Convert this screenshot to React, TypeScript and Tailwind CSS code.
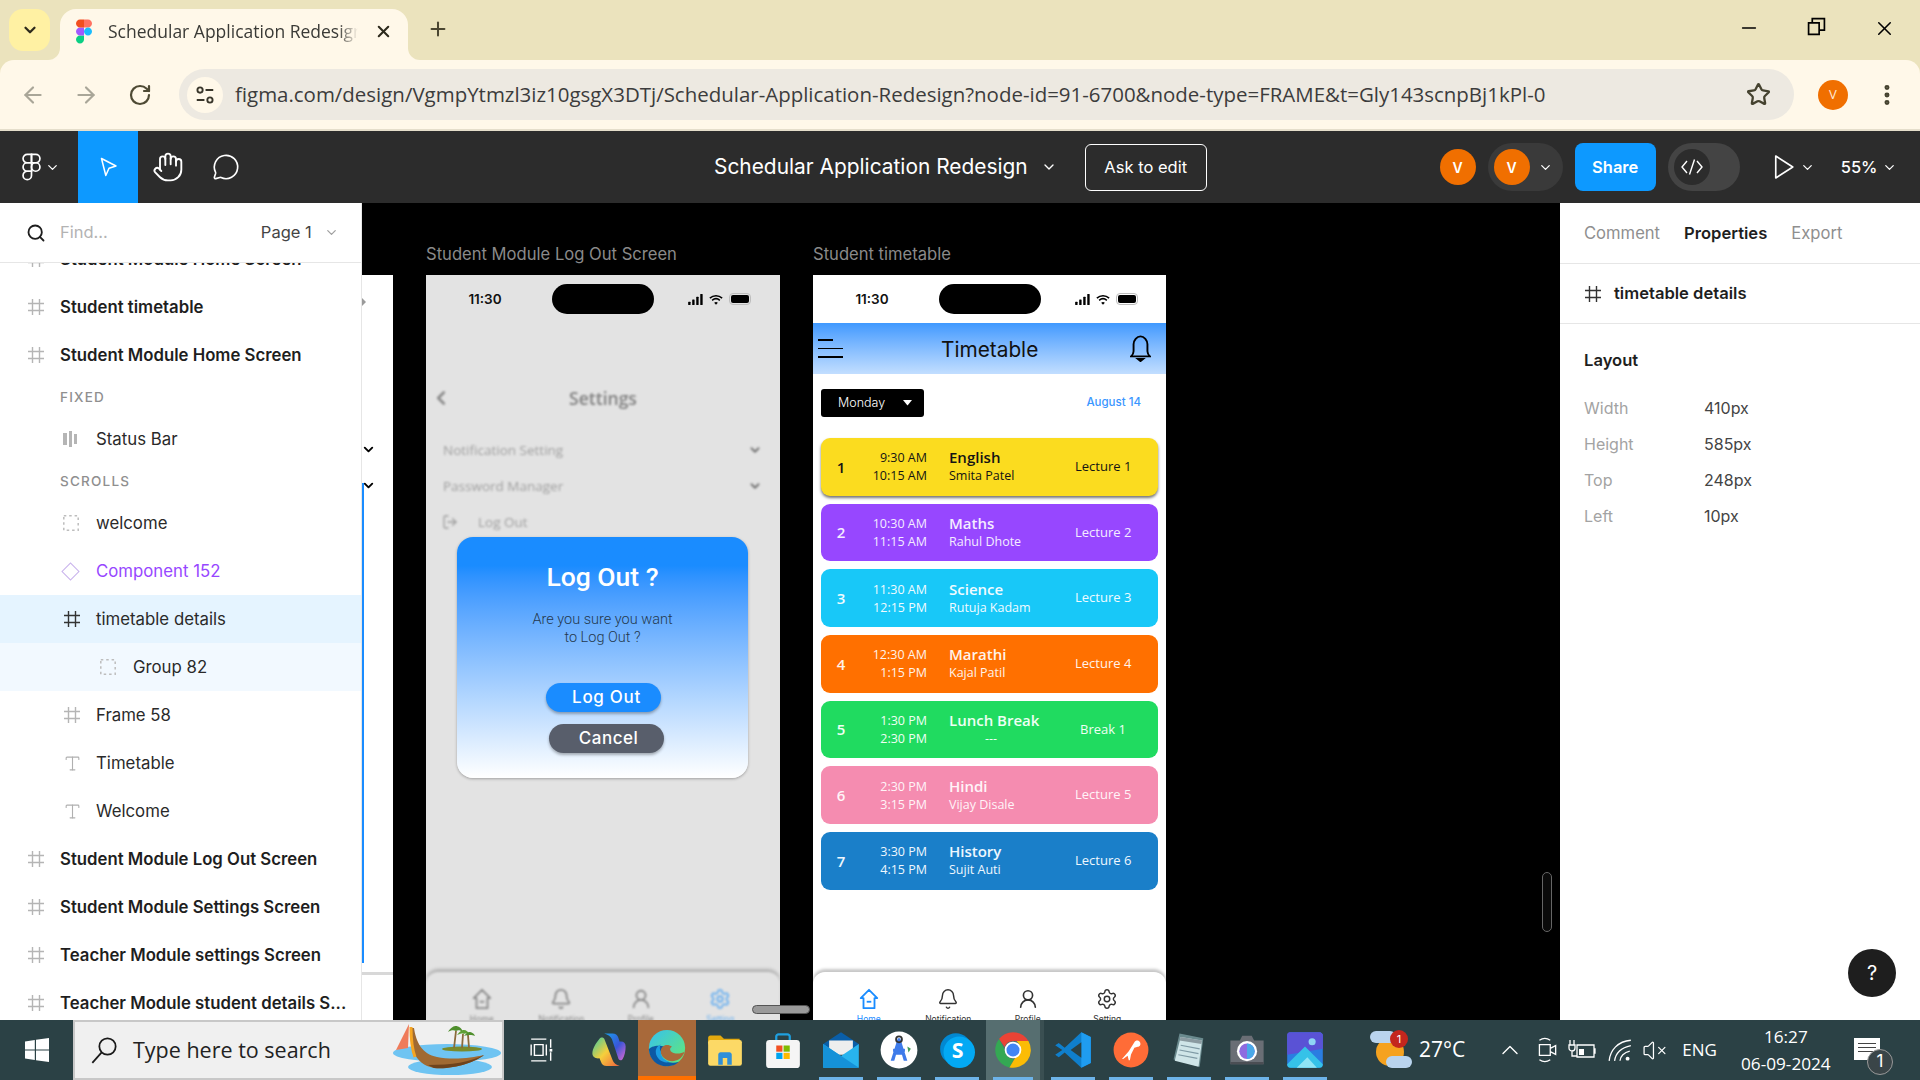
import type { ReactNode } from 'react'
import {
  ArrowLeft,
  ArrowRight,
  Bell,
  ChevronDown,
  ChevronLeft,
  ChevronUp,
  EllipsisVertical,
  Hand,
  LogOut,
  MessageCircle,
  Minus,
  Plus,
  RotateCw,
  Search,
  Settings,
  Star,
  Type,
  UserRound,
  VolumeX,
  X,
} from 'lucide-react'

function FigmaLogo({ outline = false }: { outline?: boolean }) {
  const props = outline
    ? { fill: 'none', stroke: 'white', strokeWidth: 2.4 }
    : {}
  return (
    <svg viewBox="-1.5 -1.5 27 39" className="h-full w-full">
      <path {...props} fill={outline ? 'none' : '#0acf83'} d="M6 36c3.3 0 6-2.7 6-6v-6H6c-3.3 0-6 2.7-6 6s2.7 6 6 6z" />
      <path {...props} fill={outline ? 'none' : '#a259ff'} d="M0 18c0-3.3 2.7-6 6-6h6v12H6c-3.3 0-6-2.7-6-6z" />
      <path {...props} fill={outline ? 'none' : '#f24e1e'} d="M0 6c0-3.3 2.7-6 6-6h6v12H6C2.7 12 0 9.3 0 6z" />
      <path {...props} fill={outline ? 'none' : '#ff7262'} d="M12 0h6c3.3 0 6 2.7 6 6s-2.7 6-6 6h-6V0z" />
      <path {...props} fill={outline ? 'none' : '#1abcfe'} d="M24 18c0 3.3-2.7 6-6 6s-6-2.7-6-6 2.7-6 6-6 6 2.7 6 6z" />
    </svg>
  )
}

function FrameHash({ className }: { className: string }) {
  return (
    <svg viewBox="0 0 18 18" className={className} fill="none" stroke="currentColor" strokeWidth="1.4">
      <path d="M5.5 1v16M12.5 1v16M1 5.5h16M1 12.5h16" />
    </svg>
  )
}

function TabStrip() {
  return (
    <div className="relative flex h-[60px] shrink-0 bg-[#ebe3bd] pt-[9px]">
      <div className="ml-[9px] flex h-[42px] w-[41px] items-center justify-center rounded-[14px] bg-[#fff1a3]">
        <ChevronDown className="size-[18px] text-[#2d2a1c]" strokeWidth={3} />
      </div>
      <div className="relative ml-[10px] flex h-[51px] w-[348px] items-center rounded-t-[16px] bg-[#fff8e9] pb-[6px] pl-[15px]">
        <div className="h-[27px] w-[18px]">
          <FigmaLogo />
        </div>
        <span className="ml-[15px] w-[250px] overflow-hidden whitespace-nowrap font-['Open_Sans',sans-serif] text-[17.5px] text-[#3a3a36] [mask-image:linear-gradient(to_right,black_92%,transparent)]">
          Schedular Application Redesign
        </span>
        <X className="ml-[16px] size-[19px] text-[#2d2a1c]" strokeWidth={2.6} />
        <div className="absolute bottom-0 left-[-12px] size-3 bg-[#fff8e9]">
          <div className="size-3 rounded-br-[12px] bg-[#ebe3bd]" />
        </div>
        <div className="absolute right-[-12px] bottom-0 size-3 bg-[#fff8e9]">
          <div className="size-3 rounded-bl-[12px] bg-[#ebe3bd]" />
        </div>
      </div>
      <Plus className="mt-[9px] ml-[19px] size-[22px] text-[#4a4631]" strokeWidth={2.2} />
      <div className="ml-auto flex items-start pt-[8px] pr-[24px] text-black">
        <Minus className="size-[22px]" strokeWidth={1.6} />
        <svg viewBox="0 0 18 18" className="ml-[47px] size-[19px]" fill="none" stroke="black" strokeWidth="1.6">
          <path d="M1.5 5.5h10v11h-10zM5 5V1.500h11.500v11H12" />
        </svg>
        <X className="ml-[47px] size-[23px]" strokeWidth={1.6} />
      </div>
    </div>
  )
}

function ChromeBar() {
  return (
    <div className="flex h-[71px] shrink-0 items-center rounded-t-[14px] border-b-2 border-[#e5decb] bg-[#fff8e9] bg-clip-padding">
      <ArrowLeft className="ml-[20px] size-[26px] text-[#a9a698]" strokeWidth={2} />
      <ArrowRight className="ml-[27px] size-[26px] text-[#a9a698]" strokeWidth={2} />
      <RotateCw className="ml-[29px] size-[24px] text-[#4e4a34]" strokeWidth={2.2} />
      <div className="ml-[27px] flex h-[51px] w-[1615px] items-center rounded-full bg-[#ede9e1] pl-[8px]">
        <div className="flex size-[36px] items-center justify-center rounded-full bg-[#fff8e9]">
          <svg viewBox="0 0 20 20" className="size-[22px]" fill="none" stroke="#38352a" strokeWidth="1.7">
            <circle cx="5.5" cy="5.5" r="2.4" />
            <path d="M10.500 5.500h7M2.500 14.500h7" />
            <circle cx="14.500" cy="14.500" r="2.400" />
          </svg>
        </div>
        <span className="ml-[12px] font-['Open_Sans',sans-serif] text-[20.47px] whitespace-nowrap text-[#3c3c3c]">
          figma.com/design/VgmpYtmzl3iz10gsgX3DTj/Schedular-Application-Redesign?node-id=91-6700&amp;node-type=FRAME&amp;t=Gly143scnpBj1kPl-0
        </span>
        <Star className="mr-[23px] ml-auto size-[25px] text-[#45422f]" strokeWidth={2.2} />
      </div>
      <div className="ml-[24px] flex size-[30px] items-center justify-center rounded-full bg-[#f06f00] font-['Open_Sans',sans-serif] text-[13px] text-[#ffe9d6]">
        V
      </div>
      <EllipsisVertical className="ml-[26px] size-[26px] text-[#45422f]" strokeWidth={2.6} />
    </div>
  )
}

function Avatar() {
  return (
    <div className="flex size-[36px] items-center justify-center rounded-full bg-[#f06f00] text-[14px] font-semibold text-white">
      V
    </div>
  )
}

function FigmaBar() {
  return (
    <div className="flex h-[72px] shrink-0 items-center bg-[#2c2c2c] text-white">
      <div className="ml-[22px] h-[28px] w-[19px]">
        <FigmaLogo outline />
      </div>
      <ChevronDown className="ml-[4px] size-[15px]" strokeWidth={2} />
      <div className="ml-[18px] flex h-full w-[60px] items-center justify-center bg-[#0d99ff]">
        <svg viewBox="0 0 24 24" className="size-[24px]" fill="none" stroke="white" strokeWidth="1.5" strokeLinejoin="round">
          <path d="M5.500 3.500 20 11l-7 2.200-3.200 7.300z" />
        </svg>
      </div>
      <Hand className="ml-[14px] size-[32px]" strokeWidth={1.4} />
      <MessageCircle className="ml-[28px] size-[28px]" strokeWidth={1.4} />
      <span className="ml-[474px] text-[20.9px]">Schedular Application Redesign</span>
      <ChevronDown className="ml-[13px] size-[16px]" strokeWidth={2} />
      <div className="ml-[28px] flex h-[47px] w-[122px] items-center justify-center rounded-[6px] border border-white text-[16.5px]">
        Ask to edit
      </div>
      <div className="ml-[233px]">
        <Avatar />
      </div>
      <div className="ml-[12px] flex h-[48px] w-[75px] items-center rounded-full bg-[#3a3a3a] pl-[6px]">
        <Avatar />
        <ChevronDown className="ml-[8px] size-[15px]" strokeWidth={2} />
      </div>
      <div className="ml-[12px] flex h-[48px] w-[81px] items-center justify-center rounded-[8px] bg-[#0d99ff] text-[16.5px] font-semibold">
        Share
      </div>
      <div className="ml-[12px] flex h-[48px] w-[72px] items-center rounded-full bg-[#444444] pl-[6px]">
        <div className="flex size-[36px] items-center justify-center rounded-full bg-[#2c2c2c] text-[15px]">
          <svg viewBox="0 0 24 24" className="size-[24px]" fill="none" stroke="white" strokeWidth="1.4">
            <path d="M7 6 2 12l5 6M17 6l5 6-5 6M14.500 4.500l-5 15" />
          </svg>
        </div>
      </div>
      <svg viewBox="0 0 20 24" className="ml-[33px] h-[28px] w-[22px]" fill="none" stroke="white" strokeWidth="1.5" strokeLinejoin="round">
        <path d="M2.500 2v20L18 12z" />
      </svg>
      <ChevronDown className="ml-[5px] size-[15px]" strokeWidth={2} />
      <span className="ml-[26px] text-[16.5px] font-medium">55%</span>
      <ChevronDown className="ml-[4px] size-[15px]" strokeWidth={2} />
    </div>
  )
}

type LayerRow = {
  label: string
  kind: 'frame' | 'section' | 'bars' | 'group' | 'component' | 'framedark' | 'frameIndent' | 'text'
  indent?: number
  bg?: string
}

const layerRows: LayerRow[] = [
  { label: 'Student Module Home Screen', kind: 'frame' },
  { label: 'Student timetable', kind: 'frame' },
  { label: 'Student Module Home Screen', kind: 'frame' },
  { label: 'FIXED', kind: 'section' },
  { label: 'Status Bar', kind: 'bars' },
  { label: 'SCROLLS', kind: 'section' },
  { label: 'welcome', kind: 'group' },
  { label: 'Component 152', kind: 'component' },
  { label: 'timetable details', kind: 'framedark', bg: 'bg-[#e5f4ff]' },
  { label: 'Group 82', kind: 'group', indent: 1, bg: 'bg-[#f2f9ff]' },
  { label: 'Frame 58', kind: 'frameIndent' },
  { label: 'Timetable', kind: 'text' },
  { label: 'Welcome', kind: 'text' },
  { label: 'Student Module Log Out Screen', kind: 'frame' },
  { label: 'Student Module Settings Screen', kind: 'frame' },
  { label: 'Teacher Module settings Screen', kind: 'frame' },
  { label: 'Teacher Module student details S...', kind: 'frame' },
]

function LayerIcon({ kind }: { kind: LayerRow['kind'] }) {
  if (kind === 'bars') {
    return (
      <div className="flex h-[16px] items-center gap-[2px]">
        <div className="h-[12px] w-[4px] bg-[#b5b5b5]" />
        <div className="h-[16px] w-[3px] bg-[#b5b5b5]" />
        <div className="h-[10px] w-[3px] bg-[#b5b5b5]" />
      </div>
    )
  }
  if (kind === 'group') {
    return (
      <svg viewBox="0 0 16 16" className="size-[16px]" fill="none" stroke="#bdbdbd" strokeWidth="1.5" strokeDasharray="2.500 2.900">
        <rect x=".8" y=".8" width="14.400" height="14.400" />
      </svg>
    )
  }
  if (kind === 'component') {
    return <div className="ml-[1px] size-[13px] rotate-45 border-[1.5px] border-[#c9b3ec]" />
  }
  if (kind === 'text') {
    return <Type className="size-[19px] text-[#b0b0b0]" strokeWidth={1.4} />
  }
  if (kind === 'framedark') {
    return <FrameHash className="size-[18px] text-[#333333]" />
  }
  return <FrameHash className="size-[18px] text-[#b5b5b5]" />
}

function LayerItem({ row }: { row: LayerRow }) {
  if (row.kind === 'section') {
    return (
      <div className="flex h-[36px] items-center pl-[60px] text-[13.5px] font-medium tracking-[0.09em] text-[#8f8f8f]">
        {row.label}
      </div>
    )
  }
  if (row.kind === 'frame') {
    return (
      <div className="flex h-[48px] items-center pl-[27px]">
        <div className="flex w-[33px] items-center">
          <LayerIcon kind="frame" />
        </div>
        <span className="text-[16.75px] leading-[26px] font-semibold whitespace-nowrap text-[#1e1e1e]">{row.label}</span>
      </div>
    )
  }
  return (
    <div className={`flex h-[48px] items-center ${row.indent ? 'pl-[100px]' : 'pl-[63px]'} ${row.bg ?? ''}`}>
      <div className="flex w-[33px] items-center">
        <LayerIcon kind={row.kind} />
      </div>
      <span className={`pt-[2px] text-[16.8px] whitespace-nowrap ${row.kind === 'component' ? 'text-[#9747ff]' : 'text-[#2a2a2a]'}`}>
        {row.label}
      </span>
    </div>
  )
}

function LayersPanel() {
  return (
    <div className="flex w-[362px] shrink-0 flex-col overflow-hidden border-r border-[#e6e6e6] bg-white">
      <div className="relative z-10 flex h-[60px] shrink-0 items-center border-b border-[#e6e6e6] bg-white pl-[26px]">
        <Search className="size-[20px] text-[#1e1e1e]" strokeWidth={2.2} />
        <span className="ml-[14px] text-[16.5px] text-[#b3b3b3]">Find...</span>
        <span className="ml-[153px] text-[16.5px] text-[#444444]">Page 1</span>
        <ChevronDown className="ml-[12px] size-[15px] text-[#a0a0a0]" />
      </div>
      <div className="mt-[-28px]">
        {layerRows.map((row, i) => (
          <LayerItem key={i} row={row} />
        ))}
      </div>
    </div>
  )
}

function StatusBar() {
  return (
    <div className="flex h-[48px] shrink-0 items-center">
      <span className="w-[118px] text-center text-[13.5px] font-semibold text-[#111111]">11:30</span>
      <div className="ml-[8px] h-[30px] w-[102px] rounded-full bg-black" />
      <div className="ml-[34px] flex items-center gap-[6px]">
        <svg viewBox="0 0 16 12" className="h-[11px] w-[15px]" fill="black">
          <rect x="0" y="8.500" width="2.600" height="3.500" rx=".6" />
          <rect x="4.400" y="6" width="2.600" height="6" rx=".6" />
          <rect x="8.800" y="3" width="2.600" height="9" rx=".6" />
          <rect x="13.200" y="0" width="2.600" height="12" rx=".6" />
        </svg>
        <svg viewBox="0 0 16 12" className="h-[11px] w-[14px]" fill="none" stroke="black" strokeWidth="1.8">
          <path d="M1 4.400c4-3.600 10-3.600 14 0M3.600 7c2.600-2.300 6.200-2.300 8.800 0" />
          <path d="M8 12 5.900 9.600c1.200-1 3-1 4.200 0z" fill="black" stroke="none" />
        </svg>
        <div className="ml-[2px] flex h-[8px] w-[18px] rounded-[2px] bg-black outline outline-[1px] outline-offset-[1px] outline-[#bdbdbd]" />
      </div>
    </div>
  )
}

type NavItem = { label: string; icon: ReactNode; color: string }

const HomeIcon = (
  <svg viewBox="0 0 24 24" className="size-[22px]" fill="none" stroke="currentColor" strokeWidth="2" strokeLinejoin="round">
    <path d="M12 2 3 11h3v11h12V11h3z" />
    <path d="M9.500 15h5" />
  </svg>
)

function BottomNav({ items }: { items: NavItem[] }) {
  return (
    <div className="mt-auto h-[48px] shrink-0 rounded-t-[12px] bg-inherit shadow-[0_-3px_3px_rgba(0,0,0,0.22)]">
      <div className="flex pt-[16px] pl-[16px]">
        {items.map(item => (
          <div key={item.label} className={`flex w-[79.5px] flex-col items-center ${item.color}`}>
            {item.icon}
            <span className="mt-[3px] text-[8.5px] whitespace-nowrap">{item.label}</span>
          </div>
        ))}
      </div>
    </div>
  )
}

function LogOutFrame() {
  return (
    <div className="relative flex h-[745px] w-[354px] flex-col bg-[#e3e3e3]">
      <StatusBar />
      <div className="flex h-full flex-col blur-[1.2px]">
        <div className="relative mt-[55px] flex h-[40px] shrink-0 items-center justify-center font-['Open_Sans',sans-serif] text-[17.5px] font-semibold text-[#808080]">
          <ChevronLeft className="absolute left-[4px] size-[22px] text-[#8d8d8d]" strokeWidth={3} />
          Settings
        </div>
        <div className="mt-[14px] flex flex-col font-['Open_Sans',sans-serif] text-[13.5px] text-[#a0a0a0]">
          <div className="flex h-[36px] items-center justify-between pr-[18px] pl-[17px]">
            Notification Setting
            <ChevronDown className="size-[14px] text-[#777777]" strokeWidth={3.5} />
          </div>
          <div className="flex h-[36px] items-center justify-between pr-[18px] pl-[17px]">
            Password Manager
            <ChevronDown className="size-[14px] text-[#777777]" strokeWidth={3.5} />
          </div>
          <div className="flex h-[36px] items-center pl-[16px]">
            <LogOut className="size-[16px] text-[#a0a0a0]" />
            <span className="ml-[20px]">Log Out</span>
          </div>
        </div>
        <BottomNav
          items={[
            { label: 'Home', icon: HomeIcon, color: 'text-[#8a8a8a]' },
            { label: 'Notification', icon: <Bell className="size-[22px]" />, color: 'text-[#8a8a8a]' },
            { label: 'Profile', icon: <UserRound className="size-[22px]" />, color: 'text-[#8a8a8a]' },
            { label: 'Setting', icon: <Settings className="size-[22px]" />, color: 'text-[#6fb2ef]' },
          ]}
        />
      </div>
      <div className="absolute top-[262px] left-[31px] flex h-[241px] w-[291px] flex-col items-center rounded-[16px] bg-gradient-to-b from-[#1a8cff] from-[12%] to-white shadow-[0_1px_3px_rgba(0,0,0,0.3)]">
        <div className="mt-[20px] h-[40px] font-['Roboto',sans-serif] text-[26.5px] leading-[40px] font-medium text-white">Log Out ?</div>
        <div className="mt-[14px] text-center font-['Roboto',sans-serif] text-[14.5px] leading-[18px] font-light text-[#24384d]">
          Are you sure you want
          <br />
          to Log Out ?
        </div>
        <div className="mt-[36px] ml-[2px] flex h-[29px] w-[115px] items-center justify-center rounded-full bg-[#1a8cff] pt-[1px] pl-[6px] font-['Inter',sans-serif] text-[17px] font-medium tracking-[0.04em] text-white shadow-[0_2px_3px_rgba(0,0,0,0.3)]">
          Log Out
        </div>
        <div className="mt-[12px] ml-[8px] flex h-[29px] w-[115px] items-center justify-center rounded-full bg-[#585e6b] pt-[1px] pl-[4px] font-['Inter',sans-serif] text-[17px] font-medium tracking-[0.03em] text-white shadow-[0_2px_3px_rgba(0,0,0,0.3)]">
          Cancel
        </div>
      </div>
    </div>
  )
}

type Lecture = {
  n: number
  from: string
  to: string
  subject: string
  teacher: string
  tag: string
  bg: string
  text: string
}

const lectures: Lecture[] = [
  { n: 1, from: '9:30 AM', to: '10:15 AM', subject: 'English', teacher: 'Smita Patel', tag: 'Lecture 1', bg: 'bg-[#fbdc1f] shadow-[0_2px_3px_rgba(0,0,0,0.55)]', text: 'text-[#141414]' },
  { n: 2, from: '10:30 AM', to: '11:15 AM', subject: 'Maths', teacher: 'Rahul Dhote', tag: 'Lecture 2', bg: 'bg-[#9747ff]', text: 'text-[#f4ecff]' },
  { n: 3, from: '11:30 AM', to: '12:15 PM', subject: 'Science', teacher: 'Rutuja Kadam', tag: 'Lecture 3', bg: 'bg-[#18c8f8]', text: 'text-[#f0fbff]' },
  { n: 4, from: '12:30 AM', to: '1:15 PM', subject: 'Marathi', teacher: 'Kajal Patil', tag: 'Lecture 4', bg: 'bg-[#ff7000]', text: 'text-[#fff3ea]' },
  { n: 5, from: '1:30 PM', to: '2:30 PM', subject: 'Lunch Break', teacher: '---', tag: 'Break 1', bg: 'bg-[#20db60]', text: 'text-[#effff4]' },
  { n: 6, from: '2:30 PM', to: '3:15 PM', subject: 'Hindi', teacher: 'Vijay Disale', tag: 'Lecture 5', bg: 'bg-[#f58cb0]', text: 'text-[#fff4f8]' },
  { n: 7, from: '3:30 PM', to: '4:15 PM', subject: 'History', teacher: 'Sujit Auti', tag: 'Lecture 6', bg: 'bg-[#1a7fc9]', text: 'text-[#eef7fe]' },
]

function LectureCard({ item }: { item: Lecture }) {
  const isBreak = item.subject === 'Lunch Break'
  return (
    <div className={`flex h-[57.67px] items-center rounded-[9px] font-['Open_Sans',sans-serif] ${item.bg} ${item.text}`}>
      <span className="w-[40px] text-center text-[15px] font-semibold">{item.n}</span>
      <div className="w-[66px] pt-[1px] text-right text-[12.5px] leading-[18px]">
        <div>{item.from}</div>
        <div>{item.to}</div>
      </div>
      <div className="ml-[22px] w-[126px] leading-[18px]">
        <div className="text-[15px] font-semibold">{item.subject}</div>
        <div className={`mt-[1px] text-[12.5px] ${isBreak ? 'w-[84px] text-center' : ''}`}>{item.teacher}</div>
      </div>
      <span className="w-[56px] text-center text-[13px] whitespace-nowrap">{item.tag}</span>
    </div>
  )
}

function TimetableFrame() {
  return (
    <div className="flex h-[745px] w-[353px] flex-col bg-white">
      <StatusBar />
      <div className="flex h-[51px] shrink-0 items-center bg-gradient-to-b from-[#3f99ff] to-[#c2deff] pr-[15px] pl-[5px]">
        <div className="flex w-[25px] flex-col gap-[7px]">
          <div className="h-[1.5px] w-[15px] bg-black" />
          <div className="h-[1.5px] bg-black" />
          <div className="h-[1.5px] bg-black" />
        </div>
        <span className="ml-[98px] pt-[2px] text-[20.8px] text-[#111111]">Timetable</span>
        <svg viewBox="0 0 20 25" className="ml-auto h-[27px] w-[21px]" fill="none" stroke="black" strokeWidth="1.8">
          <path d="M1 20h18c-2-2-2.400-3-2.400-5V8.500C16.600 4.500 13.500 1 10 1S3.400 4.500 3.400 8.500V15c0 2-.4 3-2.400 5z" />
          <path d="M7.500 22.500h5L10 24.500z" fill="black" />
        </svg>
      </div>
      <div className="flex items-center justify-between pt-[15px] pr-[25px] pl-[8px]">
        <div className="flex h-[28px] w-[103px] items-center rounded-[3px] bg-black pl-[17px] text-[12.5px] font-light text-white">
          Monday
          <svg viewBox="0 0 10 6" className="ml-[18px] w-[9px]" fill="white">
            <path d="M0 0h10L5 6z" />
          </svg>
        </div>
        <span className="text-[11.5px] font-medium text-[#3a96ff]">August 14</span>
      </div>
      <div className="mt-[21px] flex flex-col gap-[8px] px-[8px]">
        {lectures.map(item => (
          <LectureCard key={item.n} item={item} />
        ))}
      </div>
      <BottomNav
        items={[
          { label: 'Home', icon: HomeIcon, color: 'text-[#1a8cff]' },
          { label: 'Notification', icon: <Bell className="size-[22px]" strokeWidth={1.6} />, color: 'text-[#333333]' },
          { label: 'Profile', icon: <UserRound className="size-[22px]" strokeWidth={1.8} />, color: 'text-[#333333]' },
          { label: 'Setting', icon: <Settings className="size-[22px]" strokeWidth={1.6} />, color: 'text-[#333333]' },
        ]}
      />
    </div>
  )
}

function Canvas() {
  return (
    <div className="relative flex-1 overflow-hidden bg-black">
      {/* neighbour frame cut off by the layers panel */}
      <div className="absolute top-[72px] left-0 h-[745px] w-[31px] bg-white">
        <div className="absolute top-[697px] left-0 h-[3px] w-full bg-[#d8d8d8]" />
      </div>
      <svg viewBox="0 0 4 8" className="absolute top-[95px] left-0 h-[8px] w-[4px]" fill="#9a9a9a">
        <path d="M0 0l4 4-4 4z" />
      </svg>
      <ChevronDown className="absolute top-[239px] left-[-1px] size-[15px] text-black" strokeWidth={3} />
      <ChevronDown className="absolute top-[275px] left-[-1px] size-[15px] text-black" strokeWidth={3} />
      <div className="absolute top-[280px] left-0 h-[480px] w-[2px] bg-[#1a8cff]" />
      <div className="absolute top-[38px] left-[64px]">
        <div className="mb-[10px] h-[24px] pt-[1px] text-[16.6px] leading-[24px] text-[#8a8a8a]">Student Module Log Out Screen</div>
        <LogOutFrame />
      </div>
      <div className="absolute top-[38px] left-[451px]">
        <div className="mb-[10px] h-[24px] pt-[1px] text-[16.6px] leading-[24px] text-[#8a8a8a]">Student timetable</div>
        <TimetableFrame />
      </div>
      <div className="absolute top-[802px] left-[390px] h-[9px] w-[58px] rounded-full border border-[#555555] bg-[#9a9a9a]" />
      <div className="absolute top-[669px] left-[1180px] h-[60px] w-[10px] rounded-full border border-[#666666] bg-[#0a0a0a]" />
    </div>
  )
}

function PropRow({ label, value }: { label: string; value: string }) {
  return (
    <div className="flex h-[36px] items-center text-[16px]">
      <span className="w-[120px] text-[#a3a3a3]">{label}</span>
      <span className="text-[#444444]">{value}</span>
    </div>
  )
}

function PropertiesPanel() {
  return (
    <div className="relative flex w-[360px] shrink-0 flex-col bg-white">
      <div className="flex h-[61px] shrink-0 items-center gap-[24px] border-b border-[#e6e6e6] pl-[24px] text-[16.6px] text-[#8f8f8f]">
        <span>Comment</span>
        <span className="font-semibold text-[#1e1e1e]">Properties</span>
        <span>Export</span>
      </div>
      <div className="flex h-[60px] shrink-0 items-center border-b border-[#e6e6e6] pl-[24px]">
        <FrameHash className="size-[18px] text-[#333333]" />
        <span className="ml-[12px] text-[16.6px] font-semibold text-[#1e1e1e]">timetable details</span>
      </div>
      <div className="px-[24px] pt-[24px]">
        <div className="text-[16.6px] font-semibold text-[#1e1e1e]">Layout</div>
        <div className="mt-[17px]">
          <PropRow label="Width" value="410px" />
          <PropRow label="Height" value="585px" />
          <PropRow label="Top" value="248px" />
          <PropRow label="Left" value="10px" />
        </div>
      </div>
      <div className="absolute right-[24px] bottom-[23px] flex size-[48px] items-center justify-center rounded-full bg-[#1e1e1e] text-[20px] text-white">
        ?
      </div>
    </div>
  )
}

const WindowsLogo = (
  <svg viewBox="0 0 24 24" className="size-[24px]" fill="white">
    <path d="M0 3.400 9.800 2v9.400H0zM11 1.800 24 0v11.400H11zM0 12.600h9.800V22L0 20.600zM11 12.600h13V24l-13-1.800z" />
  </svg>
)

function Boat() {
  return (
    <svg viewBox="0 0 110 56" className="h-[56px] w-[110px]">
      <ellipse cx="55" cy="31" rx="54" ry="9" fill="#6fc4f2" />
      <ellipse cx="58" cy="45" rx="42" ry="8" fill="#6fc4f2" />
      <ellipse cx="70" cy="27" rx="20" ry="2.500" fill="#7a8a2a" />
      <path d="M62 26 64 9M70 26l1-14M77 26l-1-13" stroke="#8a6a3a" strokeWidth="1.800" fill="none" />
      <path d="M56 10c3-5 6-6 8-6s6 2 7 6c-3-2-5-2-7-1-2-1-5-1-8 1z" fill="#4f8f2d" />
      <path d="M65 13c3-4 5-5 7-5s5 2 6 5c-2-1-4-2-6-1-2-1-4 0-7 1z" fill="#5f9f35" />
      <path d="M72 14c3-4 5-4 6-4s4 1 5 4c-2-1-3-1-5-1-2 0-4 0-6 1z" fill="#4f8f2d" />
      <path d="M18 6C18 25 22 42 42 46 60 48 84 40 92 33 80 36 60 38 45 35 30 32 24 20 22 6z" fill="#a06a32" />
      <path d="M42 46C60 48 84 40 92 33 78 40 60 43 36 43z" fill="#6e431c" />
      <path d="M19 5c0 12 1 22 4 30" stroke="#f5a623" strokeWidth="3" fill="none" />
      <path d="M17 2 4 28l12-2z" fill="#ef7b5a" />
    </svg>
  )
}

const CopilotIcon = (
  <svg viewBox="0 0 32 32" className="size-[38px]">
    <defs>
      <linearGradient id="cp1" x1="0" y1="0" x2="1" y2="1">
        <stop offset="0" stopColor="#18a0ee" />
        <stop offset=".55" stopColor="#3a55d8" />
        <stop offset="1" stopColor="#e06ad0" />
      </linearGradient>
      <linearGradient id="cp2" x1="0" y1="0" x2="1" y2="1">
        <stop offset="0" stopColor="#37c9a4" />
        <stop offset=".5" stopColor="#f5cf3c" />
        <stop offset="1" stopColor="#f0623c" />
      </linearGradient>
    </defs>
    <path d="M12 2h7c2.500 0 4 1.200 4.700 3.300L25 9c3-.5 5 1 5 4 0 4-1 8-2.500 10.500-.8 1.500-2.500 1.500-3.500 0L18.500 7C17.800 4.500 15 3 12 2z" fill="url(#cp1)" />
    <path d="M8 6.500c1-1.500 3-1.500 4 0l7 18c.8 2.500 3 4 6 5H14c-2.500 0-4-1.200-4.700-3.300L8 23c-3 .5-6-1-6-4 0-4 3-9 6-12.500z" fill="url(#cp2)" />
  </svg>
)

const EdgeIcon = (
  <svg viewBox="0 0 32 32" className="size-[40px]">
    <defs>
      <linearGradient id="edg" x1="0" y1="0" x2="1" y2="1">
        <stop offset="0" stopColor="#35c1f1" />
        <stop offset="1" stopColor="#66eb6e" />
      </linearGradient>
    </defs>
    <circle cx="16" cy="16" r="14.500" fill="url(#edg)" />
    <path d="M1.500 17C2 26 9 31 16.500 30.500c4 0 7-1.500 9-3.500-6 2-13 0-14.500-5-1-3 .5-6 3.500-7-6-2-12 0-13 2z" fill="#0c59a4" />
    <path d="M30 19c-3 2-9 2-11-.5-1-1.500-.5-3 1-3.500-4-3-9-1-9 4 0 5 7 9 12 7 4-1 6-4 7-7z" fill="#a9693a" />
    <path d="M11 19c0 4 3 7 7 8-4 2-11-2-11-8 0-3 2-5 4-6-1 2-1 4 0 6z" fill="#1b9de2" />
  </svg>
)

const ExplorerIcon = (
  <svg viewBox="0 0 32 32" className="size-[36px]">
    <path d="M1 5c0-1 .8-2 2-2h9l3 3h14v5H1z" fill="#e3a90f" />
    <rect x="1" y="7" width="30" height="23" rx="2" fill="#fcd966" />
    <path d="M10 29V20c0-1 1-2 2-2h8c1 0 2 1 2 2v9h-4v-6h-4v6z" fill="#2f8fd8" />
  </svg>
)

const StoreIcon = (
  <svg viewBox="0 0 32 32" className="size-[36px]">
    <path d="M10 8V4c0-1 1-2 2-2h8c1 0 2 1 2 2v4" fill="none" stroke="#1fa0e0" strokeWidth="2" />
    <rect x="1" y="7" width="30" height="25" rx="3" fill="#f5f5f5" />
    <rect x="10" y="12" width="5.500" height="5.500" fill="#f25022" />
    <rect x="16.500" y="12" width="5.500" height="5.500" fill="#7fba00" />
    <rect x="10" y="18.500" width="5.500" height="5.500" fill="#00a4ef" />
    <rect x="16.500" y="18.500" width="5.500" height="5.500" fill="#ffb900" />
  </svg>
)

const MailIcon = (
  <svg viewBox="0 0 32 32" className="size-[38px]">
    <path d="M16 1 31 11v3H1v-3z" fill="#0a5ea8" />
    <path d="M6 8h20v12H6z" fill="#eee" />
    <path d="M1 11v20h30V11L16 21z" fill="#28b4ee" />
    <path d="M1 11v20h30z" fill="#1591d8" />
  </svg>
)

const AndroidStudioIcon = (
  <svg viewBox="0 0 32 32" className="size-[38px]">
    <circle cx="16" cy="16" r="15.500" fill="white" />
    <path d="M15 6h2l6 19h-3l-1.500-5h-5L12 25H9z" fill="#3e7bea" />
    <path d="M11 15h10v2.500H11z" fill="#3e7bea" />
    <circle cx="16" cy="7" r="2.500" fill="none" stroke="#333" strokeWidth="1.500" />
    <path d="M23 13l3 2-2 3z" fill="#3f9b57" />
  </svg>
)

const SkypeIcon = (
  <svg viewBox="0 0 32 32" className="size-[36px]">
    <circle cx="15" cy="15" r="14" fill="#0288d1" />
    <circle cx="18" cy="18" r="14" fill="#03a9f4" />
    <text x="16.500" y="23" textAnchor="middle" fontSize="19" fontWeight="700" fill="white" fontFamily="Open Sans, sans-serif">
      S
    </text>
  </svg>
)

const ChromeIcon = (
  <svg viewBox="0 0 32 32" className="size-[38px]">
    <path d="M16 1a15 15 0 0 1 13 7.500H16a7.500 7.500 0 0 0-7 5L4.200 6.800A15 15 0 0 1 16 1z" fill="#ea4335" />
    <path d="M4.200 6.800 9 15.500a7.500 7.500 0 0 0 8 8L13 30.700A15 15 0 0 1 4.200 6.800z" fill="#34a853" />
    <path d="M29 8.500A15 15 0 0 1 13 30.700l6.500-11a7.500 7.500 0 0 0-.500-11.200z" fill="#fbbc05" />
    <circle cx="16" cy="16" r="7" fill="white" />
    <circle cx="16" cy="16" r="5.500" fill="#4285f4" />
  </svg>
)

const VsCodeIcon = (
  <svg viewBox="0 0 32 32" className="size-[38px]">
    <path d="M23 1 31 5v22l-8 4L9 18l-5 4-3-2 6-4-6-4 3-2 5 4z" fill="#0f7fcc" />
    <path d="M23 1 31 5v22l-8 4 0-30z" fill="#1f9cf0" />
    <path d="M23 9.500v13L14 16z" fill="#2a4145" />
  </svg>
)

const PostmanIcon = (
  <svg viewBox="0 0 32 32" className="size-[36px]">
    <circle cx="16" cy="16" r="15.500" fill="#ff6c37" />
    <path d="M8 24l6-7 5-8c1-2 4-2 5 0s0 4-2 4l-3 1-3 6-1 5h-1l-1-4-4 3z" fill="white" />
  </svg>
)

const NotepadIcon = (
  <svg viewBox="0 0 32 32" className="size-[38px]">
    <path d="M8 2 28 6l-3 24L3 24z" fill="#6a8a8e" />
    <path d="M9 5l18 3-3 22L4 25z" fill="#cfe5e8" />
    <path d="M9 5l18 3-.5 3L8 8z" fill="#8a9aa0" />
    <path d="M9 12l16 3M8 16l16 3M7 20l16 3" stroke="#7f9aa5" strokeWidth="1" />
  </svg>
)

const CameraIcon = (
  <svg viewBox="0 0 32 32" className="size-[38px]">
    <path d="M2 8h8l2-4h8l2 4h8v20H2z" fill="#6a6e75" />
    <circle cx="16" cy="17" r="8.500" fill="white" />
    <circle cx="16" cy="17" r="6.500" fill="#8e6be0" />
    <path d="M16 10.500a6.500 6.500 0 0 1 0 13z" fill="#4aa8e8" />
    <path d="M2 26h28v2H2z" fill="#4b4e54" />
  </svg>
)

const PhotosIcon = (
  <svg viewBox="0 0 32 32" className="size-[38px]">
    <rect x="1" y="1" width="30" height="30" rx="3" fill="#2a7de1" />
    <path d="M1 3c0-1 1-2 2-2h26l2 2v12L1 20z" fill="#5a52d5" />
    <path d="M1 28 16 13l15 15c0 2-1 3-3 3H4c-2 0-3-1-3-3z" fill="#35c2e8" />
    <path d="M9 31l9-9 8 9z" fill="#8fe5f5" />
    <circle cx="22" cy="9" r="3" fill="#8fd5f5" />
  </svg>
)

type TaskItem = { id: string; icon: ReactNode; cls: string; active?: boolean }

const taskItems: TaskItem[] = [
  { id: 'copilot', icon: CopilotIcon, cls: '' },
  { id: 'edge', icon: EdgeIcon, cls: 'bg-[#a8693a] border-b-[4px] border-[#ff7000]' },
  { id: 'explorer', icon: ExplorerIcon, cls: '' },
  { id: 'store', icon: StoreIcon, cls: '' },
  { id: 'mail', icon: MailIcon, cls: '', active: true },
  { id: 'studio', icon: AndroidStudioIcon, cls: '', active: true },
  { id: 'skype', icon: SkypeIcon, cls: '', active: true },
  { id: 'chrome', icon: ChromeIcon, cls: 'bg-[#566e70] border-r-[4px] border-[#3a4f52]', active: true },
  { id: 'vscode', icon: VsCodeIcon, cls: '', active: true },
  { id: 'postman', icon: PostmanIcon, cls: '', active: true },
  { id: 'notepad', icon: NotepadIcon, cls: '', active: true },
  { id: 'camera', icon: CameraIcon, cls: '', active: true },
  { id: 'photos', icon: PhotosIcon, cls: '', active: true },
]

function TaskCell({ item }: { item: TaskItem }) {
  return (
    <div className={`relative flex h-full w-[58px] items-center justify-center ${item.cls}`}>
      {item.icon}
      {item.active && <div className="absolute right-[7px] bottom-0 left-[7px] h-[3px] bg-[#6db3e8]" />}
    </div>
  )
}

function Taskbar() {
  return (
    <div className="flex h-[60px] shrink-0 items-center bg-[#2b4145] text-white">
      <div className="flex w-[73px] justify-center">{WindowsLogo}</div>
      <div className="flex h-full w-[431px] items-center border-2 border-[#c8c8c8] bg-[#f0f0f0] pl-[15px]">
        <svg viewBox="0 0 24 24" className="size-[28px]" fill="none" stroke="#1a1a1a" strokeWidth="1.500">
          <circle cx="15" cy="9" r="7" />
          <path d="M10 14 2 23" />
        </svg>
        <span className="ml-[15px] font-['Open_Sans',sans-serif] text-[21.5px] text-[#222222]">Type here to search</span>
        <div className="ml-auto">
          <Boat />
        </div>
      </div>
      <div className="flex w-[76px] justify-center">
        <svg viewBox="0 0 24 24" className="size-[26px]" fill="none" stroke="white" strokeWidth="1.300">
          <path d="M2 2h14M2 22h14M5 7h8v10H5zM2 7v10M16 7v10M20 2v8M20 14v8" />
          <rect x="19" y="11" width="2.500" height="2.500" fill="white" stroke="none" />
        </svg>
      </div>
      <div className="flex h-full">
        {taskItems.map(item => (
          <TaskCell key={item.id} item={item} />
        ))}
      </div>
      <div className="relative ml-[36px] h-[48px] w-[44px]">
        <div className="absolute top-[12px] left-[6px] size-[28px] rounded-full bg-[#f5a21f]" />
        <div className="absolute top-[5px] left-0 h-[12px] w-[26px] rounded-full bg-[#b9d4ee]" />
        <div className="absolute top-[30px] left-[16px] h-[12px] w-[26px] rounded-full bg-[#b9d4ee]" />
        <div className="absolute top-[4px] left-[20px] flex size-[18px] items-center justify-center rounded-full bg-[#c4261d] text-[11px] text-white">
          1
        </div>
      </div>
      <span className="ml-[5px] font-['Open_Sans',sans-serif] text-[21px]">27°C</span>
      <ChevronUp className="ml-[31px] size-[28px]" strokeWidth={1.2} />
      <svg viewBox="0 0 24 24" className="ml-[10px] size-[26px]" fill="none" stroke="white" strokeWidth="1.200">
        <path d="M5 7h10v10H5zM15 10.500l5-2.500v8l-5-2.500M5 3c3-2 7-2 10 0M5 21c3 2 7 2 10 0" />
      </svg>
      <svg viewBox="0 0 28 24" className="ml-[8px] h-[24px] w-[28px]" fill="none" stroke="white" strokeWidth="1.300">
        <path d="M9 7h17v12H9zM26 11h1v4h-1M2 2v5M6 2v5M1 7h6v3a3 3 0 0 1-6 0zM4 13v5h5" />
        <rect x="11" y="11" width="5" height="6" fill="white" stroke="none" />
      </svg>
      <svg viewBox="0 0 24 24" className="ml-[11px] size-[26px]" fill="none" stroke="white" strokeWidth="1.200">
        <path d="M2 22C3 12 10 4 22 3M7 22c1-7 6-12 15-14M12 22c0-4 4-8 9-9" />
        <circle cx="19" cy="20" r="1.800" fill="white" stroke="none" />
      </svg>
      <VolumeX className="ml-[9px] size-[25px]" strokeWidth={1.2} />
      <span className="ml-[15px] font-['Open_Sans',sans-serif] text-[17px]">ENG</span>
      <div className="ml-[17px] w-[104px] text-center font-['Open_Sans',sans-serif] text-[17.2px] leading-[27px]">
        <div>16:27</div>
        <div>06-09-2024</div>
      </div>
      <div className="relative ml-[13px] h-[40px] w-[44px]">
        <div className="absolute top-[8px] left-[3px] flex h-[22px] w-[26px] flex-col gap-[3px] bg-white px-[4px] pt-[5px]">
          <div className="h-[1px] bg-[#444444]" />
          <div className="h-[1px] bg-[#444444]" />
          <div className="h-[1px] bg-[#444444]" />
        </div>
        <div className="absolute top-[19px] left-[16px] flex size-[26px] items-center justify-center rounded-full border border-[#999999] bg-[#3a4548] text-[17px]">
          1
        </div>
      </div>
    </div>
  )
}

export default function App() {
  return (
    <div className="flex h-[1080px] w-[1920px] flex-col overflow-hidden bg-[#ebe3bd] font-['Inter',sans-serif]">
      <TabStrip />
      <ChromeBar />
      <FigmaBar />
      <div className="flex min-h-0 flex-1">
        <LayersPanel />
        <Canvas />
        <PropertiesPanel />
      </div>
      <Taskbar />
    </div>
  )
}
